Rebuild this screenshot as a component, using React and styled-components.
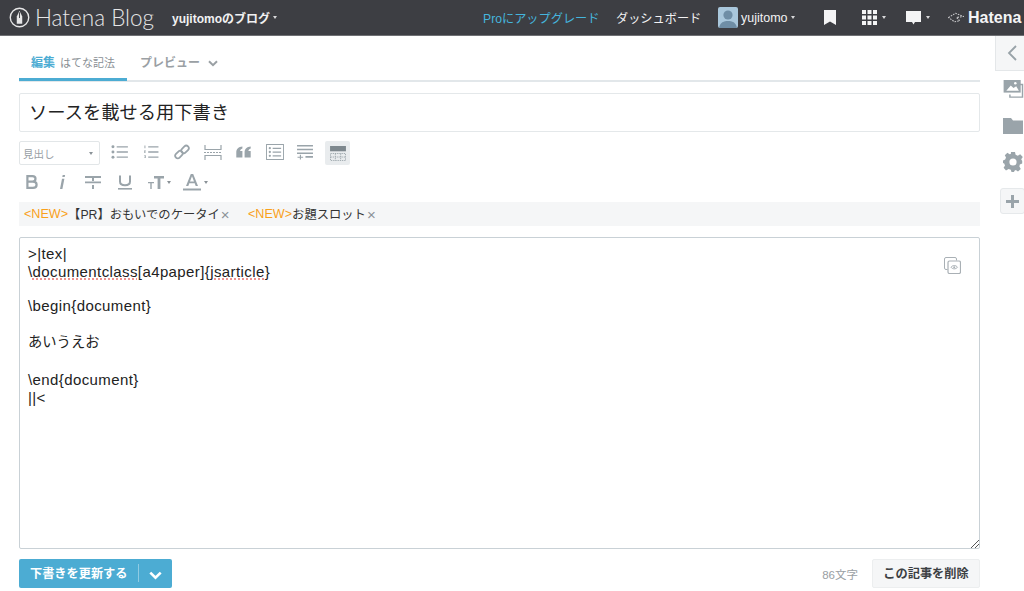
import React from "react";
import styled, { createGlobalStyle } from "styled-components";

const Global = createGlobalStyle`
  html, body { margin: 0; padding: 0; background: #fff; }
  body { font-family: "Liberation Sans", "Noto Sans CJK JP", sans-serif; color: #333; overflow: hidden; }
  * { box-sizing: border-box; }
`;

const Page = styled.div`
  width: 1024px;
  height: 591px;
  overflow: hidden;
  display: flex;
  flex-direction: column;
`;

const Header = styled.header`
  height: 36px;
  flex: none;
  background: #3d3e43;
  border-bottom: 1px solid #6f7074;
  display: flex;
  align-items: center;
  color: #fff;
  font-size: 12.2px;
  white-space: nowrap;
`;
const Brand = styled.div`
  display: flex;
  align-items: center;
  margin-left: 9px;
  width: 163px;
  flex: none;
`;
const BrandName = styled.span`
  font-family: "Lato", sans-serif;
  font-weight: 300;
  font-size: 22.5px;
  color: #e6e6e7;
  margin-left: 5px;
`;
const BlogName = styled.span`
  font-weight: 700;
  font-size: 12px;
  color: #f1f1f2;
  display: flex;
  align-items: center;
  width: 311px;
  flex: none;
`;
const Caret = styled.i`
  display: inline-block;
  width: 0;
  height: 0;
  margin-left: ${p => p.$gap ?? 3}px;
  border-left: 2.5px solid transparent;
  border-right: 2.5px solid transparent;
  border-top: 3px solid ${p => p.$color ?? "#d8d8da"};
`;
const ProLink = styled.span`
  color: #45b5dd;
  width: 133px;
  flex: none;
`;
const DashLink = styled.span`
  color: #f2f2f3;
  width: 102px;
  flex: none;
`;
const User = styled.div`
  display: flex;
  align-items: center;
  width: 106px;
  flex: none;
  color: #f2f2f3;
  font-size: 12.5px;
`;
const Avatar = styled.div`
  width: 20px;
  height: 21px;
  border-radius: 2px;
  overflow: hidden;
  margin-right: 3px;
  display: flex;
`;
const HeadIcon = styled.div`
  display: flex;
  align-items: center;
  width: ${p => p.$w}px;
  flex: none;
`;
const HatenaMark = styled.span`
  font-weight: 700;
  font-size: 16px;
  color: #f4f4f5;
  margin-left: 4px;
`;

const Body = styled.div`
  flex: 1;
  min-height: 0;
  display: flex;
`;
const Main = styled.main`
  width: 961px;
  margin-left: 19px;
  flex: none;
  display: flex;
  flex-direction: column;
`;
const Tabs = styled.nav`
  height: 46px;
  flex: none;
  display: flex;
  border-bottom: 2px solid #e2e7ea;
`;
const EditTab = styled.div`
  width: 108px;
  height: 45px;
  padding: 19px 0 0 12px;
  border-bottom: 3px solid #4cacd3;
  font-size: 11px;
  line-height: 16px;
  color: #8a9095;
  white-space: nowrap;
`;
const EditStrong = styled.strong`
  color: #4cacd3;
  font-size: 12px;
  margin-right: 5px;
`;
const PreviewTab = styled.div`
  margin-left: 13px;
  padding-top: 19px;
  font-size: 12px;
  line-height: 16px;
  font-weight: 700;
  color: #9aa0a4;
  display: flex;
  align-items: flex-start;
  gap: 8px;
`;
const Title = styled.div`
  margin-top: 11px;
  height: 39px;
  flex: none;
  border: 1px solid #e4e8ea;
  border-radius: 2px;
  padding-left: 9px;
  font-size: 18.3px;
  line-height: 37px;
  color: #222;
`;
const ToolRow = styled.div`
  display: flex;
  align-items: center;
  height: ${p => p.$h}px;
  margin-top: ${p => p.$mt}px;
  flex: none;
`;
const Select = styled.div`
  width: 81px;
  height: 24px;
  border: 1px solid #e2e6e8;
  border-radius: 2px;
  padding-left: 3px;
  display: flex;
  align-items: center;
  justify-content: space-between;
  padding-right: 6px;
  font-size: 10.5px;
  color: #99a0a5;
  margin-right: 4px;
`;
const Tool = styled.div`
  width: ${p => p.$w ?? 31}px;
  height: 24px;
  flex: none;
  display: flex;
  align-items: center;
  justify-content: center;
  gap: 2px;
  padding-bottom: ${p => p.$pb ?? 2}px;
  margin-left: ${p => p.$ml ?? 0}px;
  border-radius: 2px;
  background: ${p => (p.$active ? "#e9ecee" : "transparent")};
`;
const Notices = styled.div`
  margin-top: 7px;
  height: 24px;
  flex: none;
  background: #f5f6f7;
  display: flex;
  align-items: center;
  padding-left: 5px;
  font-size: 12.3px;
  color: #333;
  white-space: nowrap;
`;
const Notice = styled.span`
  display: inline-flex;
  align-items: center;
  width: ${p => p.$w}px;
`;
const New = styled.span`
  color: #f9a11b;
  font-size: 12.6px;
`;
const Close = styled.span`
  color: #8c9297;
  font-size: 15px;
  margin-left: 1px;
`;
const Editor = styled.div`
  position: relative;
  margin-top: 11px;
  height: 312px;
  flex: none;
  border: 1px solid #c9d1d6;
  border-radius: 2px;
  padding: 7px 8px;
  font-size: 15px;
  letter-spacing: 0.4px;
  color: #222;
`;
const Line = styled.div`
  height: ${p => p.$h ?? 18}px;
  line-height: 18px;
  white-space: pre;
`;
const Kana = styled.span`
  font-size: 14.3px;
  letter-spacing: 0;
`;
const Misspelled = styled.span`
  text-decoration: underline dotted #e8706b;
  text-underline-offset: 2px;
`;
const CopyIcon = styled.div`
  position: absolute;
  top: 19px;
  right: 18px;
  display: flex;
`;
const Grip = styled.div`
  position: absolute;
  right: 0;
  bottom: 0;
  display: flex;
`;
const Footer = styled.footer`
  margin-top: 10px;
  display: flex;
  align-items: center;
  height: 29px;
  flex: none;
`;
const Save = styled.div`
  width: 153px;
  height: 29px;
  background: #4cacd3;
  border-radius: 2px;
  color: #fff;
  font-weight: 700;
  font-size: 12.2px;
  display: flex;
  align-items: center;
  padding: 0 0 1px 11px;
`;
const SaveDivider = styled.i`
  width: 1px;
  height: 18px;
  background: #8fcbe3;
  margin: 0 10px 0 10px;
`;
const Count = styled.span`
  margin-left: auto;
  font-size: 11.5px;
  color: #9aa0a4;
  margin-right: 14px;
`;
const Delete = styled.div`
  width: 108px;
  height: 29px;
  background: #f5f6f7;
  border: 1px solid #eceeef;
  border-radius: 2px;
  color: #3c4043;
  font-weight: 700;
  font-size: 12.2px;
  display: flex;
  align-items: center;
  justify-content: center;
  padding-bottom: 1px;
`;
const Side = styled.aside`
  margin-left: 15px;
  width: 29px;
  flex: none;
  display: flex;
  flex-direction: column;
  align-items: flex-start;
`;
const SideToggle = styled.div`
  width: 29px;
  height: 35px;
  background: #f5f6f7;
  border-left: 1px solid #e4e7e9;
  border-bottom: 1px solid #e4e7e9;
  display: flex;
  align-items: center;
  justify-content: center;
  padding-left: 4px;
  margin-bottom: 9px;
`;
const SideIcon = styled.div`
  height: ${p => p.$h}px;
  margin-left: 8px;
  display: flex;
  align-items: flex-start;
`;
const PlusBox = styled.div`
  width: 25px;
  height: 26px;
  margin-left: 5px;
  background: #f5f6f7;
  border: 1px solid #e6e9eb;
  border-radius: 3px;
  display: flex;
  align-items: center;
  justify-content: center;
`;

const G = "#9aa4aa";

const Pen = () => (
  <svg width="21" height="21" viewBox="0 0 20 20">
    <circle cx="10" cy="10" r="8.8" fill="none" stroke="#e6e6e7" strokeWidth="1.3" />
    <path d="M7.4 9 10 3.6 12.6 9V16H7.4Z" fill="#e6e6e7" />
    <path d="M10 5V10.5" stroke="#3d3e43" strokeWidth="0.9" />
  </svg>
);
const Chevron = ({ color = "#9aa0a4", w = 10, sw = 2 }) => (
  <svg width={w} height={w * 0.7} viewBox="0 0 10 7" style={{ marginTop: 5 }}>
    <path d="M1 1.2 5 5.2 9 1.2" fill="none" stroke={color} strokeWidth={sw} />
  </svg>
);
const ListBullet = () => (
  <svg width="17" height="14" viewBox="0 0 18 15" fill={G}>
    <circle cx="2" cy="2" r="1.6" /><circle cx="2" cy="7.5" r="1.6" /><circle cx="2" cy="13" r="1.6" />
    <path d="M6 1.3H18V2.7H6ZM6 6.8H18V8.2H6ZM6 12.3H18V13.7H6Z" />
  </svg>
);
const ListNum = () => (
  <svg width="16" height="14" viewBox="0 0 16 15" fill={G}>
    <path d="M1 .5H2V3.5H1ZM0.5 6H2.5V7H1V8H2.5V8.6H0.5ZM0.5 11H2.5V14H0.5V13.4H1.8V12.8H1V12.2H1.8V11.6H0.5Z" />
    <path d="M5 1.3H16V2.7H5ZM5 6.8H16V8.2H5ZM5 12.3H16V13.7H5Z" />
  </svg>
);
const LinkI = () => (
  <svg width="16" height="16" viewBox="0 0 17 17" fill="none" stroke={G} strokeWidth="1.9">
    <rect x="0.8" y="8.5" width="9" height="5.4" rx="2.7" transform="rotate(-45 5.3 11.2)" />
    <rect x="7.2" y="3.1" width="9" height="5.4" rx="2.7" transform="rotate(-45 11.7 5.8)" />
  </svg>
);
const More = () => (
  <svg width="18" height="15" viewBox="0 0 18 15" fill="none" stroke={G}>
    <path d="M1 0V4.5H17V0M1 15V10.5H17V15" strokeWidth="1.2" />
    <path d="M0 7.5H18" strokeWidth="1.1" strokeDasharray="2 1" />
  </svg>
);
const Quote = () => (
  <svg width="15" height="12" viewBox="0 0 15 12" fill={G}>
    <path d="M6.4 0.5V2.4C5 2.8 4.2 3.8 4.1 5H6.4V11.5H0.3V6C0.3 3 2.7 0.8 6.4 0.5ZM14.7 0.5V2.4C13.3 2.8 12.5 3.8 12.4 5H14.7V11.5H8.6V6C8.6 3 11 0.8 14.7 0.5Z" />
  </svg>
);
const Toc = () => (
  <svg width="18" height="16" viewBox="0 0 19 17" fill={G}>
    <path d="M0 0H19V17H0ZM1 1V16H18V1Z" />
    <circle cx="4" cy="4.5" r="1.2" /><circle cx="4" cy="8.5" r="1.2" /><circle cx="4" cy="12.5" r="1.2" />
    <path d="M7 4H16V5.2H7ZM7 8H16V9.2H7ZM7 12H16V13.2H7Z" />
  </svg>
);
const Fold = () => (
  <svg width="16" height="15" viewBox="0 0 17 16" fill={G}>
    <path d="M0 0H17V1.6H0ZM0 4H17V5.6H0ZM0 8H17V9.6H0ZM9 11.8H17V13.6H9ZM3 10.5H4.2V12.5H6.5V13.5H4.2V15.5H3V13.5H0.5V12.5H3Z" />
  </svg>
);
const TableI = () => (
  <svg width="16" height="15" viewBox="0 0 18 17" fill="none">
    <path d="M0 0H18V6H0Z" fill="#7e888e" />
    <path d="M0.5 8.5H17.5V16.5H0.5ZM0.5 12.5H17.5M6 8.5V16.5M12 8.5V16.5" stroke={G} strokeDasharray="1.5 1" />
  </svg>
);
const Strike = () => (
  <svg width="16" height="15" viewBox="0 0 16 15" fill={G}>
    <path d="M0 1H16V3H0ZM7 3H9V6H7ZM0 6.5H16V8.3H0ZM7 10H9V14H7Z" />
  </svg>
);
const Under = () => (
  <svg width="14" height="15" viewBox="0 0 14 15" fill="none" stroke={G} strokeWidth="2">
    <path d="M2 0.5V6.5C2 9 4 10.3 7 10.3S12 9 12 6.5V0.5" />
    <path d="M0 13.8H14" strokeWidth="1.6" />
  </svg>
);
const TextSize = () => (
  <svg width="16" height="15" viewBox="0 0 16 15" fill={G}>
    <path d="M6 1H16V3.4H12.4V14H9.6V3.4H6ZM0 7H6V8.3H3.7V14H2.3V8.3H0Z" />
  </svg>
);
const ColorA = () => (
  <svg width="18" height="17" viewBox="0 0 18 17" fill={G}>
    <path d="M7.8 0H10.2L15 12H12.7L11.7 9.2H6.3L5.3 12H3ZM7 7.4H11L9 2.2Z" />
    <path d="M0 14.5H18V16.5H0Z" />
  </svg>
);
const BoldI = () => (
  <svg width="12" height="14" viewBox="0 0 12 14" fill="none" stroke={G} strokeWidth="2.2">
    <path d="M1.4 1.1H6.5C8.5 1.1 9.5 2.2 9.5 3.7S8.5 6.6 6.5 6.6H1.4M1.4 6.6H7C9.2 6.6 10.6 7.7 10.6 9.7S9.2 12.9 7 12.9H1.4ZM1.4 0V14" />
  </svg>
);
const ItalicI = () => (
  <svg width="7" height="14" viewBox="0 0 7 14" fill={G}>
    <path d="M3.7 0H6.1L5.7 2H3.3ZM3 3.8H5.4L3.4 14H1Z" />
  </svg>
);

export default function App() {
  return (
    <Page>
      <Global />
      <Header>
        <Brand><Pen /><BrandName>Hatena Blog</BrandName></Brand>
        <BlogName>yujitomoのブログ<Caret /></BlogName>
        <ProLink>Proにアップグレード</ProLink>
        <DashLink>ダッシュボード</DashLink>
        <User>
          <Avatar>
            <svg width="20" height="21" viewBox="0 0 20 21">
              <rect width="20" height="21" fill="#a9c7dc" />
              <circle cx="10" cy="8" r="4.6" fill="#6f8ea6" />
              <path d="M1 21C2 15 6 14 10 14S18 15 19 21Z" fill="#6f8ea6" />
            </svg>
          </Avatar>
          yujitomo<Caret />
        </User>
        <HeadIcon $w={38}>
          <svg width="12" height="15" viewBox="0 0 12 15"><path d="M0 0H12V15L6 11.5 0 15Z" fill="#f4f4f5" /></svg>
        </HeadIcon>
        <HeadIcon $w={44}>
          <svg width="15" height="15" viewBox="0 0 15 15" fill="#f4f4f5">
            <path d="M0 0H4V4H0ZM5.5 0H9.5V4H5.5ZM11 0H15V4H11ZM0 5.5H4V9.5H0ZM5.5 5.5H9.5V9.5H5.5ZM11 5.5H15V9.5H11ZM0 11H4V15H0ZM5.5 11H9.5V15H5.5ZM11 11H15V15H11Z" />
          </svg>
          <Caret $gap={5} />
        </HeadIcon>
        <HeadIcon $w={42}>
          <svg width="15" height="14" viewBox="0 0 15 14"><path d="M0 0H15V11H9L7.5 13.5 6 11H0Z" fill="#f4f4f5" /></svg>
          <Caret $gap={5} />
        </HeadIcon>
        <HeadIcon $w={76}>
          <svg width="16" height="11" viewBox="0 0 15 10" fill="none" stroke="#c9c9cb" strokeWidth="1" strokeDasharray="1.5 1">
            <path d="M0.5 5 7 1 14.5 4 8 5 11 8 6 9Z" />
          </svg>
          <HatenaMark>Hatena</HatenaMark>
        </HeadIcon>
      </Header>
      <Body>
        <Main>
          <Tabs>
            <EditTab><EditStrong>編集</EditStrong>はてな記法</EditTab>
            <PreviewTab>プレビュー<Chevron /></PreviewTab>
          </Tabs>
          <Title>ソースを載せる用下書き</Title>
          <ToolRow $h={24} $mt={9}>
            <Select>見出し<Caret $color="#8a9297" /></Select>
            <Tool><ListBullet /></Tool>
            <Tool><ListNum /></Tool>
            <Tool><LinkI /></Tool>
            <Tool><More /></Tool>
            <Tool><Quote /></Tool>
            <Tool><Toc /></Tool>
            <Tool $w={30}><Fold /></Tool>
            <Tool $active $w={25} $pb={0} $ml={5}><TableI /></Tool>
          </ToolRow>
          <ToolRow $h={24} $mt={6}>
            <Tool $w={25}><BoldI /></Tool>
            <Tool $w={36}><ItalicI /></Tool>
            <Tool $w={26}><Strike /></Tool>
            <Tool $w={38}><Under /></Tool>
            <Tool $w={30}><TextSize /><Caret $gap={1} $color="#8a9297" /></Tool>
            <Tool $w={43}><ColorA /><Caret $gap={1} $color="#8a9297" /></Tool>
          </ToolRow>
          <Notices>
            <Notice $w={224}><New>&lt;NEW&gt;</New>【PR】おもいでのケータイ<Close>×</Close></Notice>
            <Notice $w={140}><New>&lt;NEW&gt;</New>お題スロット<Close>×</Close></Notice>
          </Notices>
          <Editor>
            <Line>{">|tex|"}</Line>
            <Line>{"\\"}<Misspelled>documentclass</Misspelled>[a4paper]{"{"}<Misspelled>jsarticle</Misspelled>{"}"}</Line>
            <Line $h={16} />
            <Line>{"\\begin{document}"}</Line>
            <Line />
            <Line><Kana>あいうえお</Kana></Line>
            <Line $h={20} />
            <Line>{"\\end{document}"}</Line>
            <Line>{"||<"}</Line>
            <CopyIcon>
              <svg width="17" height="17" viewBox="0 0 17 17" fill="none" stroke="#a9b0b5" strokeWidth="1">
                <path d="M3.5 12.5H2A1.5 1.5 0 0 1 .5 11V2A1.5 1.5 0 0 1 2 .5H11A1.5 1.5 0 0 1 12.5 2V3.5" />
                <rect x="4" y="4" width="12.5" height="12.5" rx="1.5" strokeWidth="1.2" />
                <path d="M7 10.2C8.5 8 12 8 13.5 10.2 12 12.4 8.5 12.4 7 10.2Z" />
                <circle cx="10.2" cy="10.2" r="1" fill="#a9b0b5" stroke="none" />
              </svg>
            </CopyIcon>
            <Grip>
              <svg width="9" height="9" viewBox="0 0 9 9" stroke="#555" strokeWidth="1">
                <path d="M1 9 9 1M5 9 9 5" />
              </svg>
            </Grip>
          </Editor>
          <Footer>
            <Save>
              下書きを更新する<SaveDivider />
              <Chevron color="#fff" w={13} sw={2} />
            </Save>
            <Count>86文字</Count>
            <Delete>この記事を削除</Delete>
          </Footer>
        </Main>
        <Side>
          <SideToggle>
            <svg width="10" height="16" viewBox="0 0 10 16" fill="none" stroke="#98a2a8" strokeWidth="1.8"><path d="M9 1 2 8 9 15" /></svg>
          </SideToggle>
          <SideIcon $h={38}>
            <svg width="21" height="18" viewBox="0 0 22 20">
              <path d="M0 0H19V14H0Z" fill="#9aa4aa" />
              <path d="M3 12 8 6 11 9 14 7 17 12Z" fill="#fff" />
              <circle cx="13" cy="3.6" r="1.4" fill="#fff" />
              <path d="M7 16V19H21V5H18" fill="none" stroke="#9aa4aa" strokeWidth="1.6" />
            </svg>
          </SideIcon>
          <SideIcon $h={34}>
            <svg width="20" height="16" viewBox="0 0 20 16"><path d="M0 0H8L10 2.5H20V16H0Z" fill="#9aa4aa" /></svg>
          </SideIcon>
          <SideIcon $h={36}>
            <svg width="20" height="20" viewBox="0 0 20 20" fill="#9aa4aa">
              <path fillRule="evenodd" d="M8 0H12L12.6 2.8 14.8 3.7 17.2 2.2 19.8 5 18.2 7.2 19.2 9V11.6L16.8 12.6 16.4 14.4 17.8 17 15 19.6 12.8 18 11.5 18.8 11 20H8.5L7.8 17.8 5.6 17 3 18.5 .6 15.8 2 13.5 1.2 11.5 0 11V8.5L2.2 7.5 3 5.6 1.8 3.2 4.4.8 6.6 2.3 7.8 1.9ZM10 6.4A3.6 3.6 0 1 0 10 13.6 3.6 3.6 0 1 0 10 6.4Z" />
            </svg>
          </SideIcon>
          <PlusBox>
            <svg width="13" height="13" viewBox="0 0 13 13"><path d="M5 0H8V5H13V8H8V13H5V8H0V5H5Z" fill="#9aa4aa" /></svg>
          </PlusBox>
        </Side>
      </Body>
    </Page>
  );
}
